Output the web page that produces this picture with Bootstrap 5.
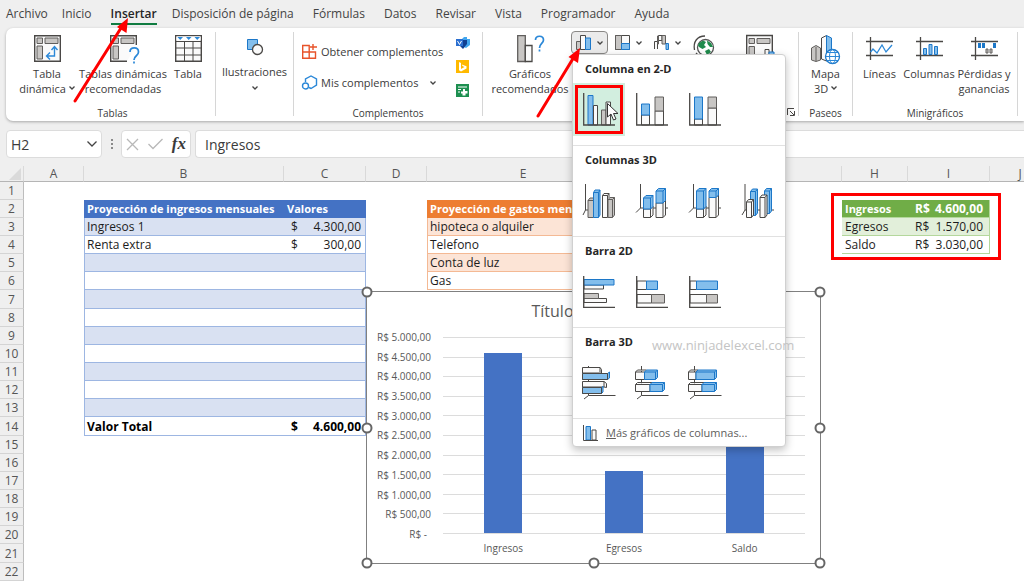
<!DOCTYPE html>
<html lang="es">
<head>
<meta charset="utf-8">
<meta name="viewport" content="width=device-width, initial-scale=1">
<title>Excel - Insertar gráfico</title>
<link href="https://cdn.jsdelivr.net/npm/bootstrap@5.3.0/dist/css/bootstrap.min.css" rel="stylesheet">
<style>
  body { font-family: "Open Sans", "Noto Sans", sans-serif; font-size: 12px; background: #efefef; color: #3b3b3b; height: 100vh; overflow: hidden; }
  button { font: inherit; color: inherit; background: none; border: 0; padding: 0; }
  svg { display: block; flex: none; overflow: visible; }
  .g { fill: #c8c6c4; stroke: #605e5c; } .w { fill: #fafafa; stroke: #4a4846; } .b { fill: #83beec; stroke: #1c77c8; }
  .n { fill: none; stroke: #4a4846; } .bl { fill: none; stroke: #2b88d8; } .chev { fill: none; stroke: #444; stroke-width: 1.3; }

  /* ribbon tabs */
  .tabs { height: 28px; padding: 0 6px; gap: 19px; }
  .tabs a { color: #444; text-decoration: none; line-height: 20px; padding-top: 4px; height: 25px; white-space: nowrap; }
  .tabs a:first-child { margin-right: -5px; }
  .tabs a.active { font-weight: 600; color: #262626; border-bottom: 2px solid #107c41; margin-right: -4px; }

  /* ribbon */
  .ribbon { background: #fff; margin-left: 6px; height: 93px; border-radius: 7px 0 0 7px; box-shadow: 0 1px 3px rgba(0,0,0,.3); position: relative; z-index: 3; padding-top: 4px; font-size: 11px; white-space: nowrap; }
  .rgroup { height: 84px; border-right: 1px solid #d6d6d6; flex: none; position: relative; line-height: 15px; }
  .caption-row { font-size: 10px; line-height: 14px; height: 14px; margin-bottom: -4px; }
  .big { display: flex; flex-direction: column; align-items: center; gap: 3px; padding-top: 3px; text-align: center; }
  .g-tables { width: 210px; } .g-illus { width: 78px; } .g-addins { width: 189px; } .g-charts { width: 316px; } .g-tours { width: 54px; } .g-spark { width: 165px; }
  .split { height: 23px; width: 37px; display: flex; align-items: center; justify-content: center; gap: 6px; border: 1px solid transparent; border-radius: 4px; margin-right: 2px; }
  .split.open { background: #ebebeb; border-color: #8a8886; }

  /* chart gallery */
  .gallery { position: absolute; top: 22px; left: 89px; width: 214px; padding: 0; border: 1px solid #d0d0d0; border-radius: 0 4px 4px 4px; box-shadow: 0 3px 8px rgba(0,0,0,.25); background: #fff; z-index: 5; font-size: 11px; line-height: 16px; color: #3b3b3b; }
  .gallery section { border-bottom: 1px solid #e1e1e1; padding-bottom: 9px; }
  .gallery h6 { font-size: 11px; font-weight: 700; line-height: 28px; margin: 0; padding-left: 12px; color: #262626; }
  .gallery .tiles { display: flex; gap: 1px; }
  .tile { width: 52px; height: 53px; display: flex; align-items: center; justify-content: center; position: relative; }
  .tile.picked { background: #d2eedf; outline: 3px solid #fe0000; outline-offset: -5px; }
  .pointer { position: absolute; left: 34px; top: 20px; }
  .more { height: 27px; width: 100%; display: flex; align-items: center; gap: 8px; padding-left: 10px; color: #605e5c; }

  /* formula bar */
  .fbar { padding: 9px 0 8px 6px; height: 45px; }
  .field { background: #fff; border: 1px solid #dcdcdc; border-radius: 4px; height: 28px; display: flex; align-items: center; }
  .field input { border: 0; outline: 0; background: none; min-width: 0; font-size: 14px; color: #3b3b3b; padding: 0; }
  .namebox { width: 96px; padding: 0 4px; } .fx { width: 70px; margin-left: 7px; padding: 0 4px; justify-content: space-between; }
  .formula { margin-left: 4px; padding-left: 9px; border-right: 0; border-radius: 4px 0 0 4px; }

  /* sheet */
  .sheet { position: relative; overflow: hidden; background: #fff; }
  .cells { table-layout: fixed; border-collapse: separate; border-spacing: 0; width: 100%; min-width: 1051px; color: #1c1c1c; }
  .cells td, .cells th { height: 18px; line-height: 16px; padding: 1px 2px 0; white-space: nowrap; overflow: hidden; font-weight: 400; }
  .cells tbody td:empty { padding: 0; }
  .cells tbody tr:nth-child(7n) > * { height: 19px; }
  .cells thead th { height: 16px; line-height: 14px; text-align: center; background: #efefef; color: #555; border-right: 1px solid #d9d9d9; border-bottom: 1px solid #b5b5b5; }
  .cells tbody th { background: #efefef; color: #555; text-align: center; border-bottom: 1px solid #d4d4d4; border-right: 1px solid #bdbdbd; }
  .cells .hd { color: #fff; font-weight: 700; font-size: 11px; }
  .cells .in { border-bottom: 1px solid #9db6e2; } .cells .in.l { border-left: 1px solid #9db6e2; } .cells .in.r { border-right: 1px solid #9db6e2; padding-left: 3px; }
  .cells .in.alt { background: #d9e1f2; } .cells .in.hd { background: #4472c4; border-color: #4472c4; }
  .cells .out { border-bottom: 1px solid #f4b994; border-left: 1px solid #f4b994; } .cells .out.alt { background: #fce4d6; } .cells .out.hd { background: #ed7d31; border-color: #ed7d31; }
  .cells .sum { border-bottom: 1px solid #b4d79c; padding-left: 3px; } .cells .sum.r { border-right: 1px solid #b4d79c; } .cells .sum.alt { background: #e2efda; } .cells .sum.hd { background: #70ad47; }
  .cells .sum.hd.r { font-size: 12px; }
  .cells .tot { font-weight: 700; color: #000; }
  .money { display: flex; justify-content: space-between; padding: 0 2px 0 4px; } .sum .money { padding-right: 4px; }

  /* embedded chart */
  .chart { position: absolute; left: 366px; top: 125px; width: 455px; height: 273px; border: 1px solid #808080; background: #fff; color: #595959; font-size: 10px; padding: 8px 15px 8px 9px; z-index: 1; }
  .chart h5 { font-size: 16px; line-height: 22px; font-weight: 400; text-align: center; margin: 0; padding-left: 6px; }
  .chart-body { display: grid; grid-template-columns: 55px 1fr; column-gap: 12px; margin-top: 8px; }
  .axis-labels { display: flex; flex-direction: column; justify-content: space-between; text-align: right; height: 211px; line-height: 14px; }
  .plot { position: relative; height: 197px; margin-top: 7px; display: flex; flex-direction: column; justify-content: space-between; }
  .plot i { height: 1px; background: #dcdcdc; }
  .bars { position: absolute; inset: 0 0 1px; display: flex; justify-content: space-around; align-items: flex-end; }
  .bars span { width: 38px; background: #4472c4; }
  .cats { grid-column: 2; display: flex; text-align: center; line-height: 14px; }
  .cats span { flex: 1; }
  .knob { position: absolute; width: 11px; height: 11px; border: 2px solid #666; border-radius: 50%; background: #fff; transform: translate(-50%,-50%); }

  /* annotations over the window */
  .mark-box { position: absolute; left: 831px; top: 27px; width: 170px; height: 67px; border: 3px solid #fe0000; z-index: 1; }
  .arrows { position: absolute; left: 0; top: 0; z-index: 9; pointer-events: none; }
  .watermark { position: absolute; left: 652px; top: 335px; font-size: 13px; line-height: 20px; color: #c4c4c4; z-index: 8; }
</style>
</head>
<body class="d-flex flex-column">

<nav class="tabs d-flex" aria-label="Cinta">
  <a href="#">Archivo</a><a href="#">Inicio</a><a href="#" class="active" aria-current="page">Insertar</a><a href="#">Disposición de página</a><a href="#">Fórmulas</a><a href="#">Datos</a><a href="#">Revisar</a><a href="#">Vista</a><a href="#">Programador</a><a href="#">Ayuda</a>
</nav>

<div class="ribbon d-flex flex-shrink-0">
  <div class="rgroup g-tables d-flex flex-column">
    <div class="d-flex flex-grow-1 align-items-start ps-2">
      <button class="big" style="width:66px">
        <svg width="27" height="28"><path class="w" d="M.7.7H26.3V26.3H.7Z" stroke-width="1.4"/><path class="g" d="M3 3H8.500V8.500H3ZM11 3H24V8.500H11ZM3 11H8.500V24H3Z"/><path class="bl" stroke-width="1.4" d="M12.500 21H20.500V12.500M16 17.500L12.500 21L16 24.500M17.500 15L20.500 11.500L23.500 15"/></svg>
        <span>Tabla<br>dinámica <svg class="d-inline" width="6" height="4"><path class="chev" d="M.5 -1.500L3 1L5.500 -1.500"/></svg></span></button>
      <button class="big" style="width:86px">
        <svg width="27" height="28"><path class="w" d="M26.300 10V.7H.7V26.300H17" stroke-width="1.400"/><path class="g" d="M3 3H8.500V8.500H3ZM11 3H24V8.500H11ZM3 11H8.500V24H3Z"/><path class="bl" stroke-width="1.700" d="M20 17C20 11.500 28.500 11.500 28.500 17C28.500 21 24 20.500 24 25M24 26.500V28.500"/></svg>
        <span>Tablas dinámicas<br>recomendadas</span></button>
      <button class="big" style="width:44px">
        <svg width="27" height="28"><path class="w" stroke-width="1.400" d="M.7.7H26.300V26.300H.7Z"/><path fill="#fff" d="M1.400 1.400H25.600V5.500H1.400Z"/><path class="n" d="M1 6.500H26M1 13H26M1 20H26M9.500 6V26M18 6V26"/><path fill="#2b88d8" d="M2.500 2H8L5.200 5ZM11 2H16.500L13.700 5ZM19.500 2H25L22.200 5Z"/></svg>
        <span>Tabla</span></button>
    </div>
    <div class="caption-row text-center ps-1">Tablas</div>
  </div>

  <div class="rgroup g-illus">
    <button class="big w-100 pt-2">
      <svg width="16" height="21" viewBox="0 1 16 21"><path class="b" d="M.5.5H10.500V10.500H.5Z"/><circle class="w" cx="10.500" cy="10.500" r="5" stroke-width="1.300"/></svg>
      <span>Ilustraciones</span>
      <svg class="mt-1" width="6" height="4"><path class="chev" d="M.5 .5L3 3L5.500 .5"/></svg></button>
  </div>

  <div class="rgroup g-addins d-flex flex-column">
    <div class="d-flex flex-grow-1">
      <div class="d-flex flex-column ps-2 pt-2">
        <button class="d-flex align-items-center gap-1 mb-3 mt-1"><svg width="15" height="15"><path fill="none" stroke="#e8532a" stroke-width="1.400" d="M.7 1.500H7.200V14.300H.7ZM.7 8H13.500V14.300H7.200M11 0V6M8 3H15"/></svg>Obtener complementos</button>
        <button class="d-flex align-items-center gap-1"><svg width="15" height="15"><path class="bl" stroke-width="1.400" d="M3.500 7V4L9 1L14.500 4V10L9 13.500L7 12.500"/><circle class="bl" cx="3.500" cy="11" r="3" stroke-width="1.400"/></svg>Mis complementos<svg class="ms-2" width="6" height="4"><path class="chev" d="M.5 .5L3 3L5.500 .5"/></svg></button>
      </div>
      <div class="d-flex flex-column gap-2 ms-auto pt-1 me-2 pe-1">
        <svg width="14" height="16"><path fill="#41a5ee" d="M8 1H11V3H14V9L10 12L6 10V3Z"/><path fill="#103f91" d="M4 4H11V8L7 13L4 10Z"/><path fill="#2b6fd0" d="M0 3H7V10H0Z"/><path fill="none" stroke="#fff" d="M1.500 5L3.500 8.500L5.500 5"/></svg>
        <svg width="13" height="16"><path fill="#ffb900" d="M0 0H13V13H0Z"/><path fill="#fff" d="M3 2L5 3V9L8.500 7L6.500 6L5.800 4.500L10.500 6.300V8.500L5 11.500L3 10.300Z"/></svg>
        <svg width="13" height="16"><path fill="#1d8f50" d="M0 0H13V13H0Z"/><path stroke="#fff" fill="none" d="M2 3H11M2 5.500H5M2 8H4"/><path fill="#fff" d="M7 5H9V7H11.500V9.500H9.500V11.500H6.500V9.500H5V7.500H7Z"/></svg>
      </div>
    </div>
    <div class="caption-row text-center">Complementos</div>
  </div>

  <div class="rgroup g-charts d-flex">
    <button class="big align-self-start" style="width:88px;padding-left:6px">
      <svg width="27" height="28"><path class="g" stroke-width="1.300" d="M.7 .7H8.300V26.500H.7Z"/><path class="w" stroke-width="1.300" d="M8.300 10.500H15V26.500H8.300Z"/><path class="bl" stroke-width="1.700" d="M18.500 5C18.500 0 26.500 0 26.500 5C26.500 8.500 22.500 8.500 22.500 13M22.500 14.500V16.500"/></svg>
      <span>Gráficos<br>recomendados</span></button>
    <div class="d-flex align-self-start dropdown" style="margin-top:-1px">
      <button class="split open" aria-expanded="true" aria-label="Insertar gráfico de columnas"><svg width="15" height="15"><path class="g" d="M.5 6.500H4.500V14.500H.5Z"/><path class="w" d="M4.500 .5H9.500V14.500H4.500Z"/><path class="b" d="M9.500 3H14.500V14.500H9.500Z"/></svg><svg width="6" height="4"><path class="chev" d="M.5 .5L3 3L5.500 .5"/></svg></button>
      <button class="split" aria-label="Gráfico de jerarquía"><svg width="15" height="15"><path class="w" d="M.5.5H14.500V14.500H.5Z"/><path class="g" d="M.5.5H6.500V14.500H.5Z"/><path class="b" d="M6.500 8.500H14.500V14.500H6.500Z"/></svg><svg width="6" height="4"><path class="chev" d="M.5 .5L3 3L5.500 .5"/></svg></button>
      <button class="split" aria-label="Gráfico de cascada"><svg width="15" height="15"><path class="w" d="M.5 14V6.500H3.500V14M4.500 .5H8V5.500H4.500Z"/><path class="g" d="M3.500 1H4.500V9H3.500ZM8 .5H11.500V9H8Z"/><path class="b" d="M12 8.500H14.500V14.500H12Z"/></svg><svg width="6" height="4"><path class="chev" d="M.5 .5L3 3L5.500 .5"/></svg></button>
      <button class="ms-1 mt-1" aria-label="Mapas"><svg width="24" height="26"><circle cx="13.500" cy="12.500" r="8" fill="#fff" stroke="#555" stroke-width="1.300"/><path fill="#1f8a4c" d="M7 8L11 5.500L14 7L12 10L14 12L10.500 14L7 12L6 10.500ZM15 5.500L19 8L21 12L18 12L15.500 9ZM13 16L17 14L19 17L15 20Z"/><path class="n" stroke-width="1.300" d="M13 1C5 1 1 7 2.500 15M4 18L7 21"/></svg></button>
    </div>
    <svg class="ms-auto mt-1" style="margin-right:25px" width="28" height="28"><path class="w" stroke-width="1.400" d="M.7-.5H26.300V26.300H.7Z"/><path class="g" d="M3 2.500H8.500V7.500H3ZM11 2.500H24V7.500H11ZM3 10.500H8.500V24H3Z"/><path class="w" d="M19 13.500H23V24H19Z"/><path class="b" d="M23 16H28V24H23Z"/></svg>
    <svg class="align-self-end" width="8" height="8" style="margin-left:-12px;margin-right:3px"><path class="n" d="M.5 7V.5H7M3 3L7 7M7.500 3V7.500H3"/></svg>

    <div class="gallery">
      <section><h6>Columna en 2-D</h6><div class="tiles">
        <button class="tile picked" aria-label="Columna agrupada"><svg width="32" height="33"><path class="b" d="M5 2.500H10V32H5Z"/><path class="w" d="M10.500 12.500H14.500V32H10.500Z"/><path class="g" d="M18.500 17H23V32H18.500Z"/><path class="w" d="M23 9H27.500V32H23Z"/><path class="n" stroke-width="1.300" d="M.7 0V32H32"/></svg>
          <svg class="pointer" width="12" height="18"><path fill="#fff" stroke="#333" d="M.5 .5V14L4 11L6.500 17L9 16L6.500 10.500H11Z"/></svg></button>
        <button class="tile" aria-label="Columna apilada"><svg width="32" height="33"><path class="w" d="M5.500 22H13.500V32H5.500ZM19 18H27.500V32H19Z"/><path class="b" d="M5.500 11H13.500V22H5.500Z"/><path class="g" d="M19 4H27.500V18H19Z"/><path class="n" stroke-width="1.300" d="M.7 0V32H32"/></svg></button>
        <button class="tile" aria-label="Columna 100% apilada"><svg width="32" height="33"><path class="w" d="M5.500 26H13.500V32H5.500ZM19 15H27.500V32H19Z"/><path class="b" d="M5.500 4H13.500V26H5.500Z"/><path class="g" d="M19 4H27.500V15H19Z"/><path class="n" stroke-width="1.300" d="M.7 0V32H32"/></svg></button>
      </div></section>
      <section><h6>Columnas 3D</h6><div class="tiles">
        <button class="tile" aria-label="Columna agrupada 3D"><svg width="32" height="34"><path class="n" d="M2.500 0V26L0 31M2.500 26H6"/><path class="g" d="M5 16.500H10.500V33.500H5ZM5 16.500L7 14H10.500V16.500"/><path class="b" d="M10.500 8.500H15.500V33.500H10.500ZM10.500 8.500L12 6H17V31L15.500 33.500M15.500 8.500L17 6"/><path class="w" d="M19.500 11.500H24.500V33.500H19.500ZM19.500 11.500L21 9.500H26L24.500 11.500M26 9.500V14"/><path class="g" d="M25 15.500H29.500V33.500H25ZM25 15.500L27 13.500H31.500V31L29.500 33.500M29.500 15.500L31.500 13.500"/></svg></button>
        <button class="tile" aria-label="Columna apilada 3D"><svg width="32" height="34"><path class="n" d="M4.500 0V24L0 28.500M4.500 24H32"/><path class="w" d="M7.500 25H14.500V33.500H7.500ZM14.500 25L17 22V31L14.500 33.500M20 19H27V33.500H20ZM27 19L29.500 16V31L27 33.500"/><path class="b" d="M7.500 14H14.500V25H7.500ZM7.500 14L10 11.500H17V22.500L14.500 25M14.500 14L17 11.500M20 7H27V19H20ZM20 7L22.500 4.500H29.500V16.500L27 19M27 7L29.500 4.500"/></svg></button>
        <button class="tile" aria-label="Columna 100% apilada 3D"><svg width="32" height="34"><path class="n" d="M4.500 0V24L0 28.500M4.500 24H32"/><path class="w" d="M7.500 25H14.500V33.500H7.500ZM14.500 25L17 22V31L14.500 33.500M20 13.500H27V33.500H20ZM27 13.500L29.500 11V31L27 33.500"/><path class="b" d="M7.500 7H14.500V25H7.500ZM7.500 7L10 4.500H17V22.500L14.500 25M14.500 7L17 4.500M20 7H27V13.500H20ZM20 7L22.500 4.500H29.500V11L27 13.500M27 7L29.500 4.500"/></svg></button>
        <button class="tile" aria-label="Columna 3D"><svg width="32" height="34"><path class="n" d="M3 0V26L0 31M3 26H32"/><path class="b" d="M8.500 7.500H13.500V31.500H8.500ZM8.500 7.500L10.500 5H15.500V29L13.500 31.500M13.500 7.500L15.500 5M22.500 7H27.500V29.500H22.500ZM22.500 7L24.500 4.500H29.500V27L27.500 29.500M27.500 7L29.500 4.500"/><path class="w" d="M4.500 18H9.500V33.500H4.500ZM4.500 18L6.500 15.500H11.500V31L9.500 33.500M9.500 18L11.500 15.500M18 13.500H23V33.500H18ZM18 13.500L20 11H25V31L23 33.500M23 13.500L25 11"/></svg></button>
      </div></section>
      <section><h6>Barra 2D</h6><div class="tiles">
        <button class="tile" aria-label="Barra agrupada"><svg width="32" height="32"><path class="w" d="M1 9H20.500V13H1ZM1 22.500H23.500V26.500H1Z"/><path class="b" d="M1 3.500H31V9H1Z"/><path class="g" d="M1 17.500H15.500V22.500H1Z"/><path class="n" stroke-width="1.300" d="M.7 0V31.300H32"/></svg></button>
        <button class="tile" aria-label="Barra apilada"><svg width="32" height="32"><path class="w" d="M1 5H10.500V13.500H1ZM1 18.500H15.500V27H1Z"/><path class="b" d="M10.500 5H21.500V13.500H10.500Z"/><path class="g" d="M15.500 18.500H28.500V27H15.500Z"/><path class="n" stroke-width="1.300" d="M.7 0V31.300H32"/></svg></button>
        <button class="tile" aria-label="Barra 100% apilada"><svg width="32" height="32"><path class="w" d="M1 5H7.500V13.500H1ZM1 18.500H17.500V27H1Z"/><path class="b" d="M7.500 5H28.500V13.500H7.500Z"/><path class="g" d="M17.500 18.500H28.500V27H17.500Z"/><path class="n" stroke-width="1.300" d="M.7 0V31.300H32"/></svg></button>
      </div></section>
      <section><h6>Barra 3D</h6><div class="tiles">
        <button class="tile" aria-label="Barra agrupada 3D"><svg width="34" height="33"><path class="n" d="M6.500 0V29.500L2 33M6.500 29.500H33.500"/><path class="w" d="M.5 1.500H18L19.500 3.500V7H.5ZM18 1.500V6M.5 15.500H22L24.500 17.500V21.500L22 21H.5ZM22 15.500V21"/><path class="b" d="M.5 21.500H19.500V27.500H.5ZM19.500 21.500L21 20.500V26L19.500 27.500M.5 7.500H25.500V13.500H.5ZM25.500 7.500L27.500 6V12L25.500 13.500"/><path class="n" d="M.5 21.500H19.500V27.500H.5ZM.5 7.500H25.500V13.500H.5Z"/></svg></button>
        <button class="tile" aria-label="Barra apilada 3D"><svg width="34" height="33"><path class="n" d="M6.500 0V29.500L2 33M6.500 29.500H33.500"/><path class="w" d="M.5 6H9.500V13.500H.5ZM.5 6L2.500 4H11.500M.5 18.500H15V25.500H.5ZM.5 18.500L2.500 16.500H17"/><path class="b" d="M9.500 6H20.500V13.500H9.500ZM9.500 6L11.500 4H22.500V11.500L20.500 13.500M20.500 6L22.500 4M15 18.500H27.500V25.500H15ZM15 18.500L17 16.500H29.500V23.500L27.500 25.500M27.500 18.500L29.500 16.500"/></svg></button>
        <button class="tile" aria-label="Barra 100% apilada 3D"><svg width="34" height="33"><path class="n" d="M6.500 0V29.500L2 33M6.500 29.500H33.500"/><path class="w" d="M.5 6H8V13.500H.5ZM.5 6L2.500 4H10M.5 18.500H14V25.500H.5ZM.5 18.500L2.500 16.500H16"/><path class="b" d="M8 6H26.500V13.500H8ZM8 6L10 4H28.500V11.500L26.500 13.500M26.500 6L28.500 4M14 18.500H26.500V25.500H14ZM14 18.500L16 16.500H28.500V23.500L26.500 25.500M26.500 18.500L28.500 16.500"/></svg></button>
      </div></section>
      <button class="more"><svg width="15" height="16"><path class="b" d="M3 1.500H7.500V15H3Z"/><path class="w" d="M9 5H13V15H9Z"/><path class="n" d="M.5 0V15.500H15"/></svg><span><u>M</u>ás gráficos de columnas...</span></button>
    </div>
  </div>

  <div class="rgroup g-tours d-flex flex-column">
    <button class="big">
      <svg width="29" height="28"><path class="g" d="M.5 13L5 10.500L9.500 13V25L5 26.500L.5 25ZM5 12V26"/><path class="w" d="M10.500 3L15.500 .5V26L10.500 24Z"/><path class="b" d="M15.500 .5L20.500 3V24L15.500 26Z"/><circle cx="21.500" cy="21.500" r="7" fill="#fff" stroke="#1c77c8" stroke-width="1.300"/><ellipse class="bl" cx="21.500" cy="21.500" rx="3" ry="7"/><path class="bl" d="M14.500 21.500H28.500M16 17.500H27M16 25.500H27"/></svg>
      <span>Mapa<br>3D <svg class="d-inline" width="6" height="4"><path class="chev" d="M.5 -1.500L3 1L5.500 -1.500"/></svg></span></button>
    <div class="caption-row text-center mt-auto">Paseos</div>
  </div>

  <div class="rgroup g-spark d-flex flex-column">
    <div class="d-flex">
      <button class="big" style="width:53px"><svg width="27" height="28"><path class="n" stroke-width="1.300" d="M4.500 2V25M0 6.500H27M0 20.500H27"/><path class="bl" stroke-width="1.300" d="M4.500 17L7 14L11 18L16 10L20 17L26 10"/></svg><span>Líneas</span></button>
      <button class="big" style="width:46px"><svg width="27" height="28"><path class="n" stroke-width="1.300" d="M4.500 2V25M0 6.500H27M0 20.500H27"/><path class="b" d="M7.500 13.500H10.500V19.500H7.500ZM13 9.500H16V19.500H13ZM18.500 11.500H21.500V19.500H18.500Z"/></svg><span>Columnas</span></button>
      <button class="big" style="width:64px"><svg width="27" height="28"><path class="n" stroke-width="1.300" d="M4.500 2V25M0 6.500H27M0 20.500H27"/><path fill="#1c77c8" d="M7 8H10V13H7ZM11 8H14V13H11ZM22 8H25V13H22Z"/><path class="g" d="M15 14H17V18H15ZM19 14H21V18H19Z"/></svg><span>Pérdidas y<br>ganancias</span></button>
    </div>
    <div class="caption-row text-center mt-auto">Minigráficos</div>
  </div>
</div>

<div class="fbar d-flex flex-shrink-0">
  <div class="field namebox"><input class="w-100" aria-label="Cuadro de nombres" value="H2"><svg width="10" height="6"><path class="chev" d="M.5 .5L5 5L9.500 .5"/></svg></div>
  <svg class="ms-2 mt-2" width="4" height="12"><path fill="#8a8a8a" d="M1 1h2v2h-2zM1 5h2v2h-2zM1 9h2v2h-2z"/></svg>
  <div class="field fx">
    <button aria-label="Cancelar"><svg width="13" height="13"><path fill="none" stroke="#b8b8b8" stroke-width="1.300" d="M1 1L12 12M12 1L1 12"/></svg></button>
    <button aria-label="Introducir"><svg width="15" height="12"><path fill="none" stroke="#b8b8b8" stroke-width="1.300" d="M.5 6L5 10.500L14.500 1"/></svg></button>
    <button aria-label="Insertar función" style="font:italic 700 17px/20px 'Liberation Serif',serif">fx</button>
  </div>
  <div class="field formula flex-grow-1"><input class="w-100" aria-label="Barra de fórmulas" value="Ingresos"></div>
</div>

<main class="sheet flex-grow-1">
  <table class="cells">
    <colgroup><col style="width:24px"><col style="width:60px"><col style="width:200px"><col style="width:82px"><col style="width:61px"><col style="width:193px"><col style="width:80px"><col style="width:142px"><col style="width:66px"><col style="width:82px"><col></colgroup>
    <thead><tr><th><svg class="ms-auto me-0" width="12" height="12"><path fill="#dadada" d="M12 0V12H0Z"/></svg></th><th>A</th><th>B</th><th>C</th><th>D</th><th>E</th><th>F</th><th>G</th><th>H</th><th>I</th><th>J</th></tr></thead>
    <tbody>
      <tr><th>1</th><td></td><td></td><td></td><td></td><td></td><td></td><td></td><td></td><td></td><td></td></tr>
      <tr><th>2</th><td></td><td class="in l hd">Proyección de ingresos mensuales</td><td class="in r hd">Valores</td><td></td><td class="out hd">Proyección de gastos mensuales</td><td></td><td></td><td class="sum hd">Ingresos</td><td class="sum r hd"><div class="money"><span>R$</span><span>4.600,00</span></div></td><td></td></tr>
      <tr><th>3</th><td></td><td class="in l alt">Ingresos 1</td><td class="in r alt"><div class="money"><span>$</span><span>4.300,00</span></div></td><td></td><td class="out alt">hipoteca o alquiler</td><td></td><td></td><td class="sum alt">Egresos</td><td class="sum r alt"><div class="money"><span>R$</span><span>1.570,00</span></div></td><td></td></tr>
      <tr><th>4</th><td></td><td class="in l">Renta extra</td><td class="in r"><div class="money"><span>$</span><span>300,00</span></div></td><td></td><td class="out">Telefono</td><td></td><td></td><td class="sum">Saldo</td><td class="sum r"><div class="money"><span>R$</span><span>3.030,00</span></div></td><td></td></tr>
      <tr><th>5</th><td></td><td class="in l alt"></td><td class="in r alt"></td><td></td><td class="out alt">Conta de luz</td><td colspan="5"></td></tr>
      <tr><th>6</th><td></td><td class="in l"></td><td class="in r"></td><td></td><td class="out">Gas</td><td colspan="5"></td></tr>
      <tr><th>7</th><td></td><td class="in l alt"></td><td class="in r alt"></td><td colspan="7"></td></tr>
      <tr><th>8</th><td></td><td class="in l"></td><td class="in r"></td><td colspan="7"></td></tr>
      <tr><th>9</th><td></td><td class="in l alt"></td><td class="in r alt"></td><td colspan="7"></td></tr>
      <tr><th>10</th><td></td><td class="in l"></td><td class="in r"></td><td colspan="7"></td></tr>
      <tr><th>11</th><td></td><td class="in l alt"></td><td class="in r alt"></td><td colspan="7"></td></tr>
      <tr><th>12</th><td></td><td class="in l"></td><td class="in r"></td><td colspan="7"></td></tr>
      <tr><th>13</th><td></td><td class="in l alt"></td><td class="in r alt"></td><td colspan="7"></td></tr>
      <tr><th>14</th><td></td><td class="in l tot">Valor Total</td><td class="in r tot"><div class="money"><span>$</span><span>4.600,00</span></div></td><td colspan="7"></td></tr>
      <tr><th>15</th><td colspan="10"></td></tr>
      <tr><th>16</th><td colspan="10"></td></tr>
      <tr><th>17</th><td colspan="10"></td></tr>
      <tr><th>18</th><td colspan="10"></td></tr>
      <tr><th>19</th><td colspan="10"></td></tr>
      <tr><th>20</th><td colspan="10"></td></tr>
      <tr><th>21</th><td colspan="10"></td></tr>
      <tr><th>22</th><td colspan="10"></td></tr>
    </tbody>
  </table>

  <div class="chart">
    <h5>Título del gráfico</h5>
    <div class="chart-body">
      <div class="axis-labels"><span>R$ 5.000,00</span><span>R$ 4.500,00</span><span>R$ 4.000,00</span><span>R$ 3.500,00</span><span>R$ 3.000,00</span><span>R$ 2.500,00</span><span>R$ 2.000,00</span><span>R$ 1.500,00</span><span>R$ 1.000,00</span><span>R$ 500,00</span><span class="pe-1">R$ -</span></div>
      <div class="plot"><i></i><i></i><i></i><i></i><i></i><i></i><i></i><i></i><i></i><i></i><i></i>
        <div class="bars"><span style="height:92%"></span><span style="height:31.4%"></span><span style="height:60.6%"></span></div>
      </div>
      <div class="cats"><span>Ingresos</span><span>Egresos</span><span>Saldo</span></div>
    </div>
    <b class="knob" style="left:0;top:0"></b><b class="knob" style="left:50%;top:0"></b><b class="knob" style="left:100%;top:0"></b><b class="knob" style="left:0;top:50%"></b><b class="knob" style="left:100%;top:50%"></b><b class="knob" style="left:0;top:100%"></b><b class="knob" style="left:50%;top:100%"></b><b class="knob" style="left:100%;top:100%"></b>
  </div>
  <div class="mark-box"></div>
</main>

<svg class="arrows" width="620" height="130" aria-hidden="true"><g fill="#fe0000" stroke="#fe0000"><path stroke-width="3" stroke-linecap="round" d="M75 101L121 28M538 116L574 57"/><path stroke="none" d="M128 18L126.500 33L117 27ZM580 48L578 63L568.500 57Z"/></g></svg>
<div class="watermark">www.ninjadelexcel.com</div>

<script src="https://cdn.jsdelivr.net/npm/bootstrap@5.3.0/dist/js/bootstrap.bundle.min.js"></script>
</body>
</html>
